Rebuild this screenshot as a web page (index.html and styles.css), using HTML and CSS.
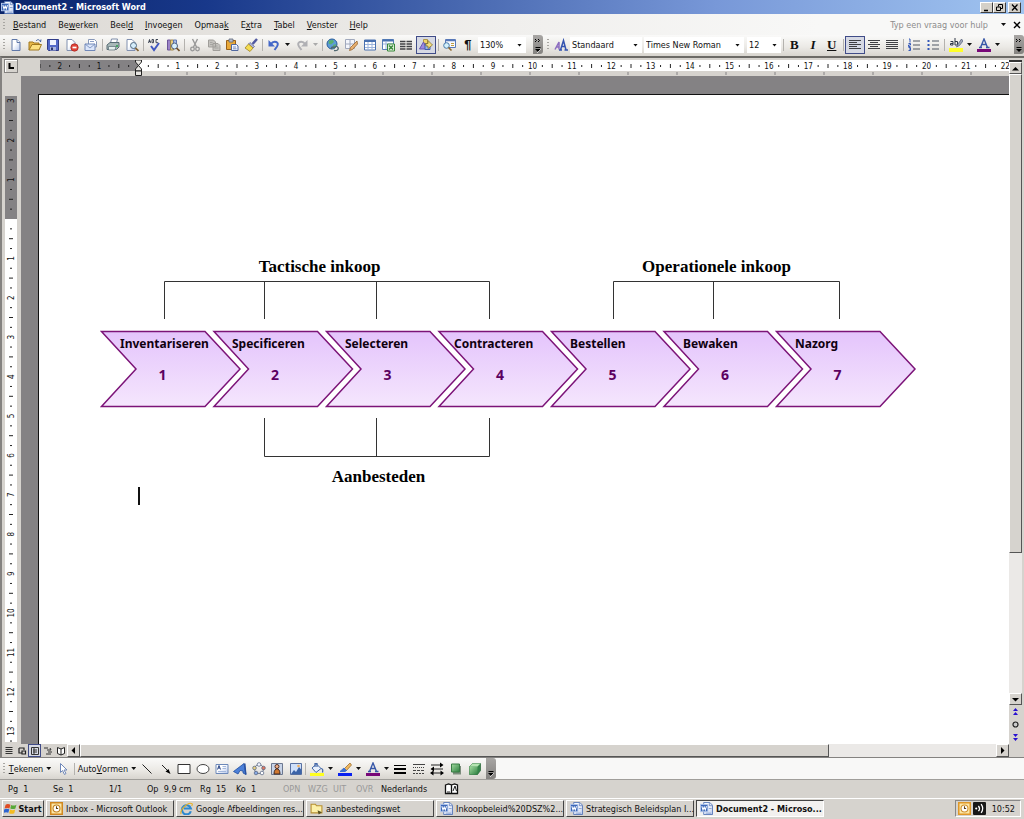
FILE: index.html
```html
<!DOCTYPE html>
<html lang="nl">
<head>
<meta charset="utf-8">
<title>Document2 - Microsoft Word</title>
<link rel="stylesheet" href="styles.css">
</head>
<body>
<svg class="defs" aria-hidden="true">
  <linearGradient id="paper" x1="0" y1="0" x2="1" y2="1"><stop offset=".4" stop-color="#fff"/><stop offset="1" stop-color="#b4c6ec"/></linearGradient>
  <linearGradient id="green" x1="0" y1="0" x2="1" y2="1"><stop offset="0" stop-color="#a4dca0"/><stop offset="1" stop-color="#2e8040"/></linearGradient>
  <linearGradient id="lilac" x1="0" y1="0" x2="0" y2="1"><stop offset="0" stop-color="#e4c4fc"/><stop offset="1" stop-color="#f5e6fd"/></linearGradient>
  <symbol id="word" viewBox="0 0 14 14"><path d="M4 .5h6.500l3 3v10H4z" fill="url(#paper)" stroke="#5878b8"/><path d="M10 1v3h3" fill="#dfe8fa" stroke="#5878b8" stroke-width=".8"/><rect x=".5" y="2.500" width="8" height="8" fill="#3c68b8" stroke="#b8cbee"/><path d="M2 4.500l1.200 4 1.300-3 1.200 3 1.300-4" fill="none" stroke="#fff" stroke-width="1.100"/><path d="M9.500 7h3M6 12h6" stroke="#86a0d0"/></symbol>
</svg>
<div class="window">
  <header class="titlebar">
    <svg class="ico12"><use href="#word"/></svg>
    <h1>Document2 - Microsoft Word</h1>
    <div class="winbtns">
      <button aria-label="Minimaliseren"><svg viewBox="0 0 10 9"><path d="M2 7.500h4" stroke="#000" stroke-width="1.500"/></svg></button>
      <button aria-label="Herstellen"><svg viewBox="0 0 10 9"><path d="M3.500 3.500v-2h4v4h-2M1.500 4h4v3.500h-4z" fill="none" stroke="#000"/></svg></button>
      <button class="close" aria-label="Sluiten"><svg viewBox="0 0 10 9"><path d="M2 1.500l5.500 6M7.500 1.500l-5.500 6" stroke="#000" stroke-width="1.300"/></svg></button>
    </div>
  </header>

  <nav class="menubar">
    <i class="grip"></i>
    <button><u>B</u>estand</button><button>Be<u>w</u>erken</button><button>Beel<u>d</u></button><button><u>I</u>nvoegen</button><button>Opmaa<u>k</u></button><button>E<u>x</u>tra</button><button><u>T</u>abel</button><button><u>V</u>enster</button><button><u>H</u>elp</button>
    <input class="ask" type="text" aria-label="Typ een vraag voor hulp" placeholder="Typ een vraag voor hulp">
    <i class="tri"></i>
    <button class="docclose" aria-label="Document sluiten"><svg class="ico8" viewBox="0 0 8 8"><path d="M1 1l6 6M7 1L1 7" stroke="#000" stroke-width="1.400"/></svg></button>
  </nav>

  <div class="toolbar" role="toolbar" aria-label="Standaard en opmaak">
    <i class="grip"></i>
    <div class="group n5">
      <button aria-label="Nieuw"><svg viewBox="0 0 14 14"><path d="M3 1.500h5l3 3v8H3z" fill="url(#paper)" stroke="#6078a8"/><path d="M8 1.500v3h3" fill="#fff" stroke="#6078a8"/></svg></button>
      <button aria-label="Openen"><svg viewBox="0 0 14 14"><path d="M1 12V4h4l1 1h5v2" fill="#e8b848" stroke="#a07820"/><path d="M1 12l3-5.500h9.500L11 12z" fill="#fce080" stroke="#a07820"/><path d="M8 3c2-2.500 4-1 4.500 1l.5-2.500" fill="none" stroke="#4060a0"/></svg></button>
      <button aria-label="Opslaan"><svg viewBox="0 0 14 14"><path d="M1.500 1.500h11v11h-10l-1-1z" fill="#5268c8" stroke="#303c88"/><path d="M4 2h6v5H4z" fill="#eef2ff"/><path d="M4 9h6v3.500H4z" fill="#a8b4e0"/><path d="M5 9.500h2V12H5z" fill="#28346c"/></svg></button>
      <button aria-label="Machtiging"><svg viewBox="0 0 14 14"><path d="M2 1.500h5l3 3v8H2z" fill="url(#paper)" stroke="#8090b0"/><circle cx="9.500" cy="9.500" r="3.700" fill="#e04438" stroke="#a82018" stroke-width=".7"/><path d="M7.500 9.500h4" stroke="#fff" stroke-width="1.700"/></svg></button>
      <button aria-label="E-mail"><svg viewBox="0 0 14 14"><path d="M4.500 1.500h6l2 2V9h-8z" fill="#fff" stroke="#8898b8"/><path d="M1 6h10v6.500H1z" fill="#dce6fa" stroke="#7088b8"/><path d="M1 6l5 4 5-4M6 3.500h4" fill="none" stroke="#7088b8" stroke-width=".8"/></svg></button>
    </div>
    <i class="sep"></i>
    <div class="group n2">
      <button aria-label="Afdrukken"><svg viewBox="0 0 14 14"><path d="M4.500 5l1-4h6l-1 4z" fill="#fff" stroke="#7c8ca8"/><path d="M1 7l3-2.500h9V9l-2.500 2.500H1z" fill="#a8b8b8" stroke="#586c74"/><path d="M2.500 8.500h7.500l-1 3.500H2.500z" fill="#e6f0ee" stroke="#586c74" stroke-width=".7"/><path d="M10 8h2" stroke="#28a048" stroke-width="1.500"/></svg></button>
      <button aria-label="Afdrukvoorbeeld"><svg viewBox="0 0 14 14"><path d="M2 1.500h5l3 3v8H2z" fill="url(#paper)" stroke="#8090b0"/><circle cx="8.500" cy="7.500" r="3" fill="#d4ecfa" stroke="#506880"/><path d="M10.500 10l3 3" stroke="#806030" stroke-width="1.700"/></svg></button>
    </div>
    <i class="sep"></i>
    <div class="group n2">
      <button aria-label="Spelling"><svg viewBox="0 0 14 14"><path d="M1.500 5l1-3.500 1 3.500M5 1.500v3.200h1.500V1.500zM11 1.500H9v3.200h2M2 3.500h1.500" fill="none" stroke="#303848" stroke-width=".9"/><path d="M4 8l3 4 5-7" fill="none" stroke="#4058c0" stroke-width="2"/></svg></button>
      <button aria-label="Onderzoeken"><svg viewBox="0 0 14 14"><path d="M1.500 2h3v10h-3z" fill="#9c84c8" stroke="#6c5498"/><path d="M4.500 2h3v10h-3z" fill="#e8cc80" stroke="#a08848"/><path d="M7.500 2h3v7h-3z" fill="#a8bce8" stroke="#6078b0"/><circle cx="8.500" cy="8" r="3" fill="#d8f0fc" stroke="#506080"/><path d="M10.500 10l3 3" stroke="#705028" stroke-width="1.700"/></svg></button>
    </div>
    <i class="sep"></i>
    <div class="group n4">
      <button aria-label="Knippen"><svg viewBox="0 0 14 14"><path d="M4.500 1l4 8M9.500 1l-4 8" stroke="#989898" stroke-width="1.400"/><circle cx="4.500" cy="11" r="1.800" fill="none" stroke="#989898" stroke-width="1.300"/><circle cx="9.500" cy="11" r="1.800" fill="none" stroke="#989898" stroke-width="1.300"/></svg></button>
      <button aria-label="Kopiëren"><svg viewBox="0 0 14 14"><path d="M1.500 2h5l2 2v5h-7zM6 5.500h5l2 2v5H6z" fill="#c4c2be" stroke="#a09e9a"/><path d="M7.500 8h3M7.500 10h4M3 4.500h2.500M3 6.500h3" stroke="#a09e9a" stroke-width=".8"/></svg></button>
      <button aria-label="Plakken"><svg viewBox="0 0 14 14"><path d="M1.500 2.500h9v9h-9z" fill="#e8a838" stroke="#986018"/><path d="M4 1h4v3H4z" fill="#b8c0d0" stroke="#606878" stroke-width=".8"/><path d="M6.500 6.500h5l1.500 1.500v4.500H6.500z" fill="#eef4ff" stroke="#5068a0"/><path d="M8 9h3M8 10.800h3.500" stroke="#5068a0" stroke-width=".7"/></svg></button>
      <button aria-label="Opmaak kopiëren"><svg viewBox="0 0 14 14"><path d="M13 1L8.500 6" stroke="#5058a0" stroke-width="2.400"/><path d="M6 4.500l4.500 4-1.500 1.500L4.500 6z" fill="#b0b4dc" stroke="#586090" stroke-width=".7"/><path d="M4.500 6L9 10 6 13.500 1 10z" fill="#f4dc50" stroke="#a08420" stroke-width=".8"/></svg></button>
    </div>
    <i class="sep"></i>
    <button class="w19" aria-label="Ongedaan maken"><svg viewBox="0 0 14 14"><path d="M3.500 6.500C7 1.500 13 4 10 8.500L7.500 12" fill="none" stroke="#4468c8" stroke-width="2"/><path d="M1.500 2v6.500H8z" fill="#4468c8"/></svg></button><button class="drop" aria-label="Ongedaan-lijst"><i class="tri"></i></button>
    <button class="w19" aria-label="Opnieuw"><svg viewBox="0 0 14 14"><path d="M10.500 6.500C7 1.500 1 4 4 8.500L6.500 12" fill="none" stroke="#b0b0b4" stroke-width="2"/><path d="M12.500 2v6.500H6z" fill="#b0b0b4"/></svg></button><button class="drop off" aria-label="Opnieuw-lijst"><i class="tri"></i></button>
    <i class="sep"></i>
    <div class="group n6">
      <button aria-label="Hyperlink"><svg viewBox="0 0 14 14"><circle cx="6" cy="6" r="5" fill="#5c9cd8" stroke="#285c98"/><path d="M3 2.500l4-.5 1 2-3 2.500-2.500-1zM7 7l3-1-1 4-2 .5z" fill="#58b070"/><path d="M5 11c1-3 3-2 3.500-1M8 12.500c3 .5 5-1 4-3s-3-1-3.500 0" fill="none" stroke="#506870" stroke-width="1.400"/></svg></button>
      <button aria-label="Tabellen en randen"><svg viewBox="0 0 14 14"><path d="M1.500 1.500h9v9h-9zM1.500 6h9M6 1.500v9" fill="#f4f6fc" stroke="#a0a8bc"/><path d="M13 3L6.500 9.500 5.500 12.500l3-1L13.500 6z" fill="#e8b070" stroke="#98642c" stroke-width=".8"/></svg></button>
      <button aria-label="Tabel invoegen"><svg viewBox="0 0 14 14"><path d="M1.500 2h11v10h-11z" fill="#fff" stroke="#4870b0"/><path d="M1.500 3h11" stroke="#4870b0" stroke-width="2"/><path d="M5 4v8M9 4v8M2 6.500h10M2 9.500h10" stroke="#9cb4dc"/></svg></button>
      <button aria-label="Excel-werkblad invoegen"><svg viewBox="0 0 14 14"><path d="M1.500 1.500h11v10h-11z" fill="#fff" stroke="#5880b8"/><path d="M1.500 2.500h11" stroke="#4870b0" stroke-width="2"/><path d="M5 3v8M2 6h10" stroke="#9cb4dc"/><path d="M6.500 6h7v7h-7z" fill="#e4f4e0" stroke="#388838"/><path d="M8 7.500l4 4M12 7.500l-4 4" stroke="#388838" stroke-width="1.500"/></svg></button>
      <button aria-label="Kolommen"><svg viewBox="0 0 14 14"><path d="M1 3.500h5.500M1 6h5.500M1 8.500h5.500M1 11h5.500M7.500 3.500H13M7.500 6H13M7.500 8.500H13M7.500 11H13" stroke="#404044" stroke-width="1.700"/></svg></button>
      <button class="on" aria-label="Tekenen"><svg viewBox="0 0 14 14"><path d="M4.500 1.500h4v4h-4z" fill="#f0d468" stroke="#b09848"/><path d="M.5 11L4.500 4l3.500 7z" fill="#9c88e0" stroke="#6858b0"/><path d="M6 6h5v5.500H6z" fill="#94b4ec" stroke="#405cb0"/><path d="M9 2.500L13.500 7 9 10.500V8H7V5.500h2z" fill="#f0dc80" stroke="#806820" stroke-width=".7"/></svg></button>
    </div>
    <i class="sep"></i>
    <div class="group n2">
      <button aria-label="Documentstructuur"><svg viewBox="0 0 14 14"><path d="M3.500 1.500h10v8h-10z" fill="#f8faff" stroke="#5878b8"/><path d="M4 2.500h9" stroke="#5878b8" stroke-width="1.500"/><path d="M9 5.500h3M9 7.500h3" stroke="#c09c40"/><circle cx="4.500" cy="7.500" r="2.800" fill="#d4f0fa" stroke="#4878a8"/><path d="M6.500 9.500l3 3" stroke="#90682c" stroke-width="1.600"/></svg></button>
      <button aria-label="Alineamarkeringen"><span class="pilcrow">¶</span></button>
    </div>
    <label class="combo zoomc"><select aria-label="In-/uitzoomen"><option>130%</option></select></label>
    <button class="overflow" aria-label="Opties voor werkbalk"><svg viewBox="0 0 10 18"><path d="M2 3l1.500 1.500L2 6M5 3l1.500 1.500L5 6" fill="none" stroke="#000"/><path d="M2.500 11.500h5" stroke="#000"/><path d="M2 13h6l-3 3z"/><path d="M4 17l4-4" stroke="#fff" stroke-width=".7"/></svg></button>
    <i class="grip g2"></i>
    <button class="w19" aria-label="Stijlen en opmaak"><svg viewBox="0 0 14 14"><path d="M1 11.500L5 4v7.500M2.500 9H5" fill="none" stroke="#8c6cc0" stroke-width="1.500"/><path d="M6.500 12l3-9.500 2.500 9.500M7.500 8.500h4M5 12h3M10.500 12H14" fill="none" stroke="#3454b0" stroke-width="1.500"/></svg></button>
    <label class="combo style"><select aria-label="Stijl"><option>Standaard</option></select></label>
    <label class="combo font"><select aria-label="Lettertype"><option>Times New Roman</option></select></label>
    <label class="combo size"><select aria-label="Tekengrootte"><option>12</option></select></label>
    <i class="sep"></i>
    <div class="group n3 biu"><button aria-label="Vet"><b>B</b></button><button aria-label="Cursief"><em>I</em></button><button aria-label="Onderstrepen"><u>U</u></button></div>
    <i class="sep"></i>
    <div class="group n3">
      <button class="on" aria-label="Links uitlijnen"><svg viewBox="0 0 14 14"><path d="M1 2.500h12M1 4.500h8M1 6.500h12M1 8.500h8M1 10.500h12" stroke="#404044" stroke-width="1.200"/></svg></button>
      <button aria-label="Centreren"><svg viewBox="0 0 14 14"><path d="M1 2.500h12M3 4.500h8M1 6.500h12M3 8.500h8M1 10.500h12" stroke="#404044" stroke-width="1.200"/></svg></button>
      <button aria-label="Uitvullen"><svg viewBox="0 0 14 14"><path d="M1 2.500h12M1 4.500h12M1 6.500h12M1 8.500h12M1 10.500h12" stroke="#404044" stroke-width="1.200"/></svg></button>
    </div>
    <i class="sep"></i>
    <div class="group n2">
      <button aria-label="Nummering"><svg viewBox="0 0 14 14"><path d="M6 3h7M6 7h7M6 11h7" stroke="#505864" stroke-width="1.200"/><path d="M2 1l1 0v3.500M1.500 5.500h2v1.500h-2v1.500h2M1.500 9.500h2v3h-2M2 11h1.500" fill="none" stroke="#3458b8"/></svg></button>
      <button aria-label="Opsommingstekens"><svg viewBox="0 0 14 14"><path d="M6 3h7M6 7h7M6 11h7" stroke="#505864" stroke-width="1.200"/><path d="M1.500 2h2v2h-2zM1.500 6h2v2h-2zM1.500 10h2v2h-2z" fill="#3458b8"/></svg></button>
    </div>
    <i class="sep"></i>
    <button class="w19" aria-label="Markeren"><svg viewBox="0 0 14 14"><path d="M0 10h14v4H0z" fill="#ffff28"/><path d="M1.500 3.500H4V7H1.500V5.500H4M6 0v7h2.500V3.500H6" fill="none" stroke="#303848"/><path d="M12.500 1L9 6 7.500 9 10.500 7.500 14 3z" fill="#a0a8b8" stroke="#505c78" stroke-width=".7"/></svg></button><button class="drop" aria-label="Markeerkleur"><i class="tri"></i></button>
    <button class="w19" aria-label="Tekstkleur"><svg viewBox="0 0 14 14"><path d="M0 11h14v3H0z" fill="#780878"/><path d="M3.500 9.500L7 1l3.500 8.500M4.500 6.500h5M2 9.500h3M9 9.500h3.500" fill="none" stroke="#3858a8" stroke-width="1.400"/></svg></button><button class="drop" aria-label="Kleurenlijst"><i class="tri"></i></button>
    <button class="overflow last" aria-label="Opties voor werkbalk Opmaak"><svg viewBox="0 0 10 18"><path d="M2 3l1.500 1.500L2 6M5 3l1.500 1.500L5 6" fill="none" stroke="#000"/><path d="M2.500 11.500h5" stroke="#000"/><path d="M2 13h6l-3 3z"/></svg></button>
  </div>

  <main class="work">
    <div class="left">
      <div class="corner"><button aria-label="Tabstop links"><svg viewBox="0 0 10 10"><path d="M3.500 2v5H8" fill="none" stroke="#000" stroke-width="2"/></svg></button></div>
      <div class="vruler"><svg id="vr" aria-hidden="true"></svg></div>
    </div>
    <div class="middle">
      <div class="hruler"><svg id="hr" aria-hidden="true"></svg></div>
      <div class="canvas">
        <article class="page">
          <svg class="diagram" id="diagram" viewBox="100 255 820 232" role="img" aria-label="Inkoopproces">
            <text class="head" x="319.500" y="272">Tactische inkoop</text>
            <text class="head" x="716.500" y="272">Operationele inkoop</text>
            <text class="head" x="378.500" y="482">Aanbesteden</text>
            <path class="bracket" d="M164.500 319V281.500H489.500V319M264.500 281v38M376.500 281v38M613.500 319V281.500H839.500V319M713.500 281v38M264.500 418v38.500H489.500V418M376.500 418v38"/>
          </svg>
          <div class="caret"></div>
        </article>
      </div>
    </div>
    <div class="vscroll">
      <i class="split"></i>
      <button aria-label="Omhoog"><svg viewBox="0 0 9 9"><path d="M1 6.500h7L4.500 3z"/></svg></button>
      <i class="thumb"></i><i class="trough"></i>
      <button aria-label="Omlaag"><svg viewBox="0 0 9 9"><path d="M1 3h7L4.500 6.500z"/></svg></button>
      <button class="flat" aria-label="Vorige pagina"><svg viewBox="0 0 9 9"><path d="M2 4h5L4.500 1zM2 8h5L4.500 5z" fill="#2810d0"/></svg></button>
      <button class="flat" aria-label="Bladeren"><svg viewBox="0 0 9 9"><circle cx="4.500" cy="4.500" r="2.500" fill="#ccc" stroke="#202020" stroke-width="1.200"/></svg></button>
      <button class="flat" aria-label="Volgende pagina"><svg viewBox="0 0 9 9"><path d="M2 1h5L4.500 4zM2 5h5L4.500 8z" fill="#2810d0"/></svg></button>
    </div>
    <div class="hscroll">
      <div class="views">
        <button aria-label="Normaal"><svg viewBox="0 0 10 10"><path d="M1.500 1.500h7M1.500 3.500h7M1.500 5.500h7M1.500 7.500h7" stroke="#333"/></svg></button>
        <button aria-label="Weblay-out"><svg viewBox="0 0 10 10"><path d="M2 2h5v2M2 2v5h3M5 5h3.500v3H5z" fill="none" stroke="#222" stroke-width="1.200"/></svg></button>
        <button class="on" aria-label="Afdrukweergave"><svg viewBox="0 0 10 10"><path d="M1.500 1.500h7v7h-7zM3 4h4M3 6h4M4 2v6" fill="none" stroke="#333"/></svg></button>
        <button aria-label="Overzicht"><svg viewBox="0 0 10 10"><path d="M1 2h4M4 4h4M5 6h4M3 8h5M7 2l1 2" fill="none" stroke="#333"/></svg></button>
        <button aria-label="Leesindeling"><svg viewBox="0 0 10 10"><path d="M5 3L1.500 1.500v6L5 9l3.500-1.500v-6zv6" fill="#fff" stroke="#222"/></svg></button>
      </div>
      <button class="arrow" aria-label="Naar links"><svg viewBox="0 0 9 9"><path d="M6 1v7L2.500 4.500z"/></svg></button>
      <i class="thumb"></i><i class="trough"></i>
      <button class="arrow" aria-label="Naar rechts"><svg viewBox="0 0 9 9"><path d="M3 1v7l3.500-3.500z"/></svg></button>
      <i class="box"></i>
    </div>
  </main>

  <div class="toolbar drawbar" role="toolbar" aria-label="Tekenen">
    <i class="grip"></i>
    <button class="label tek"><u>T</u>ekenen<i class="tri"></i></button>
    <button class="w19" aria-label="Objecten selecteren"><svg viewBox="0 0 14 14"><path d="M4.500 1.500v9l2-2 2 4 1.500-1-2-3.500h3z" fill="#fff" stroke="#7088b8"/></svg></button>
    <i class="sep"></i>
    <button class="label auto">Auto<u>V</u>ormen<i class="tri"></i></button>
    <div class="group n9">
      <button aria-label="Lijn"><svg viewBox="0 0 14 14"><path d="M2.500 2.500l9 9" stroke="#222"/></svg></button>
      <button aria-label="Pijl"><svg viewBox="0 0 14 14"><path d="M3 3l6 6" stroke="#222"/><path d="M11.500 12l-5-2.500L9.500 7z"/></svg></button>
      <button aria-label="Rechthoek"><svg viewBox="0 0 14 14"><path d="M1 2.500h12v9H1z" fill="#fff" stroke="#333"/></svg></button>
      <button aria-label="Ovaal"><svg viewBox="0 0 14 14"><ellipse cx="7" cy="7" rx="6" ry="4.500" fill="#fff" stroke="#444"/></svg></button>
      <button aria-label="Tekstvak"><svg viewBox="0 0 14 14"><path d="M1 2.500h12v9H1z" fill="url(#paper)" stroke="#6c88b8"/><path d="M2.500 7.500l1.500-4 1.500 4M3 6h2" fill="none" stroke="#2c4888"/><path d="M7.500 4.500H11M7.500 6.500H11M3 9.500h8" stroke="#a4b8dc"/></svg></button>
      <button aria-label="WordArt"><svg viewBox="0 0 14 14"><path d="M.5 9.500L11 1.500l2 11-3-1.500v-2L7 8.500 5 12z" fill="#4c80d8" stroke="#204ca0" stroke-width=".8"/><path d="M11 1.500l1.500 0 1 11h-1.500z" fill="#2850a0"/></svg></button>
      <button aria-label="Diagram"><svg viewBox="0 0 14 14"><circle cx="7" cy="7" r="4.500" fill="none" stroke="#707c90"/><g stroke="#506080" stroke-width=".7"><circle cx="7" cy="2.500" r="1.800" fill="#f4f6ff"/><circle cx="11.500" cy="6" r="1.800" fill="#e07860"/><circle cx="10" cy="11" r="1.800" fill="#fff"/><circle cx="4" cy="11" r="1.800" fill="#88a8e0"/><circle cx="2.500" cy="6" r="1.800" fill="#e8d080"/></g></svg></button>
      <button aria-label="Illustratie"><svg viewBox="0 0 14 14"><path d="M1.500 1.500h11v11h-11z" fill="#c8d4e8" stroke="#6c7890"/><circle cx="7" cy="4.500" r="2" fill="#f0b088" stroke="#503028"/><path d="M4 12c0-7 6-7 6 0z" fill="#d07830" stroke="#402820"/></svg></button>
      <button aria-label="Afbeelding"><svg viewBox="0 0 14 14"><path d="M1.500 1.500h11v11h-11z" fill="#cfe0fa" stroke="#5870a0"/><path d="M2 12l3-4 2 2 3-5 2.500 3v4z" fill="#3c64a8"/><circle cx="9.500" cy="4" r="1.300" fill="#f0b060"/></svg></button>
    </div>
    <i class="sep"></i>
    <button class="w19" aria-label="Opvulkleur"><svg viewBox="0 0 14 14"><path d="M0 11h14v3H0z" fill="#ffff20"/><path d="M6.500 2L11 6.500 6 10.500 2 6z" fill="#e8f0fc" stroke="#4468a8"/><path d="M5 5V1.500h2V5M11 6.500c2 0 2 2 1.500 4" fill="none" stroke="#4468a8" stroke-width="1.200"/></svg></button><button class="drop" aria-label="Opvulkleuren"><i class="tri"></i></button>
    <button class="w19" aria-label="Lijnkleur"><svg viewBox="0 0 14 14"><path d="M0 11h14v3H0z" fill="#0820f0"/><path d="M12 1L6 7l2 2 5.500-6z" fill="#f0b860" stroke="#906020" stroke-width=".7"/><path d="M6 6L2 9.500H7L8.500 8.500z" fill="#3c70d0" stroke="#3c70d0"/></svg></button><button class="drop" aria-label="Lijnkleuren"><i class="tri"></i></button>
    <button class="w19" aria-label="Tekstkleur"><svg viewBox="0 0 14 14"><path d="M0 11h14v3H0z" fill="#780878"/><path d="M3.500 9.500L7 1l3.500 8.500M4.500 6.500h5M2 9.500h3M9 9.500h3.500" fill="none" stroke="#3858a8" stroke-width="1.400"/></svg></button><button class="drop" aria-label="Tekstkleuren"><i class="tri"></i></button>
    <div class="group n5">
      <button aria-label="Lijnstijl"><svg viewBox="0 0 14 14"><path d="M1 3.500h12" stroke="#000"/><path d="M1 7h12" stroke="#000" stroke-width="2"/><path d="M1 11h12" stroke="#000" stroke-width="2"/></svg></button>
      <button aria-label="Streepstijl"><svg viewBox="0 0 14 14"><path d="M1 2.500h12" stroke="#444"/><path d="M1 5.500h12" stroke="#444" stroke-dasharray="1 1"/><path d="M1 8.500h12" stroke="#444" stroke-dasharray="3 1"/><path d="M1 11.500h12" stroke="#444" stroke-dasharray="2 1"/></svg></button>
      <button aria-label="Pijlstijl"><svg viewBox="0 0 14 14"><path d="M1 3h10M3 7h10M2 11h10" stroke="#222" stroke-width="1.200"/><path d="M10 .5L13.500 3 10 5.500zM4 4.500L.5 7 4 9.500zM10.500 8.500L14 11l-3.500 2.500zM3.500 8.500L0 11l3.500 2.500z"/></svg></button>
      <button aria-label="Schaduwstijl"><svg viewBox="0 0 14 14"><path d="M4 4h8v8.500H4z" fill="#7c8c7c"/><path d="M2.500 2h8v8h-8z" fill="url(#green)" stroke="#387c44"/></svg></button>
      <button aria-label="3D-stijl"><svg viewBox="0 0 14 14"><path d="M1.500 4.500l3-3h8v7l-3 4h-8z" fill="#348448" stroke="#246434" stroke-width=".7"/><path d="M1.500 4.500h8v8h-8z" fill="url(#green)"/><path d="M1.500 4.500l3-3h8l-3 3z" fill="#b4e4b0"/></svg></button>
    </div>
    <button class="overflow" aria-label="Opties voor werkbalk Tekenen"><svg viewBox="0 0 10 18"><path d="M2.500 11.500h5" stroke="#000"/><path d="M2 13h6l-3 3z"/><path d="M4 17l4-4" stroke="#fff" stroke-width=".7"/></svg></button>
  </div>

  <footer class="status">
    <span class="c45">Pg&nbsp; 1</span><span class="c56">Se&nbsp; 1</span><span class="c38">1/1</span><span class="c53">Op&nbsp; 9,9 cm</span><span class="c36">Rg&nbsp; 15</span><span class="c47">Ko&nbsp; 1</span><span class="c26 off">OPN</span><span class="c26 off">WZG</span><span class="c23 off">UIT</span><span class="c26 off">OVR</span><span class="c63">Nederlands</span>
    <svg class="book" viewBox="0 0 15 12"><path d="M1.500 2l3-1 3 1v8.500h-6zM7.500 2l3-1 3 1v8.500h-6z" fill="#fff" stroke="#111" stroke-width="1.300"/><path d="M9 8l2-5 1.500 5M3 9h3" fill="none" stroke="#222"/></svg>
  </footer>

  <div class="taskbar">
    <button class="start"><svg class="ico12" viewBox="0 0 12 12"><path d="M1.500 2.500Q3.500 1 6 2.500L5 6Q3 5 .5 6z" fill="#e04c24"/><path d="M6.600 2.700Q9 4 11.500 2.500L10.500 6Q8.500 7 5.800 6z" fill="#58a838"/><path d="M.3 6.700Q2.500 5.500 4.900 6.800L4 10Q2 9-.5 10z" fill="#2c64d0"/><path d="M5.600 7Q8 8 10.300 7L9.500 10.300Q7 11.500 4.700 10.300z" fill="#f4bc20"/></svg><b>Start</b></button>
    <button class="task"><svg class="ico12" viewBox="0 0 12 12"><rect x=".7" y=".7" width="10.600" height="10.600" fill="#fce8a8" stroke="#d08820" stroke-width="1.400"/><circle cx="6" cy="6" r="3.200" fill="#fff" stroke="#c08020"/><path d="M6 4v2h1.500" fill="none" stroke="#604010"/></svg><span>Inbox - Microsoft Outlook</span></button>
    <button class="task"><svg class="ico12" viewBox="0 0 12 12"><path d="M10 8.500A4.200 4.200 0 1 1 10 6H3.500" fill="none" stroke="#2c88d0" stroke-width="2"/><path d="M1 11C-.5 8 7-.5 11 1.500c.5.500.3 1.500-.2 2.200" fill="none" stroke="#e8b020"/></svg><span>Google Afbeeldingen res...</span></button>
    <button class="task"><svg class="ico12" viewBox="0 0 12 12"><path d="M1 2h4l1 1.500h5V10H1z" fill="#fcf0a8" stroke="#b89030"/><path d="M7 7.500l4 2-3 2z" fill="#585020"/></svg><span>aanbestedingswet</span></button>
    <button class="task"><svg class="ico12"><use href="#word"/></svg><span>Inkoopbeleid%20DSZ%2...</span></button>
    <button class="task"><svg class="ico12"><use href="#word"/></svg><span>Strategisch Beleidsplan I...</span></button>
    <button class="task active"><svg class="ico12"><use href="#word"/></svg><span>Document2 - Microso...</span></button>
    <div class="tray">
      <svg class="ico12" viewBox="0 0 12 12"><rect x=".7" y=".7" width="10.600" height="10.600" fill="#fce8a8" stroke="#e09828" stroke-width="1.400"/><circle cx="6" cy="6" r="3.200" fill="#fff" stroke="#d09030"/><path d="M6 4v2h1.500" fill="none" stroke="#604010"/></svg>
      <svg class="ico12" viewBox="0 0 12 12"><rect width="12" height="12" rx="1" fill="#181818"/><circle cx="3" cy="6" r="1" fill="#fff"/><path d="M5 3.500q2 2.500 0 5M7.500 2q3 4 0 8" fill="none" stroke="#fff" stroke-width="1.200"/></svg>
      <time>10:52</time>
    </div>
  </div>
</div>
<script src="page.js"></script>
</body>
</html>
```
FILE: styles.css
```css
* { box-sizing: border-box; }
body { margin: 0; font-family: "DejaVu Sans Condensed", "DejaVu Sans", sans-serif; font-size: 9px; color: #111; background: #d4d0c8; }
button, input, select { font: inherit; color: inherit; margin: 0; padding: 0; border: 0; background: none; border-radius: 0; }
button { display: flex; align-items: center; justify-content: center; flex: none; }
svg { display: block; flex: none; }
.defs { position: absolute; width: 0; height: 0; }
.window { display: flex; flex-direction: column; height: 100vh; overflow: hidden; }
.ico12 { width: 13px; height: 13px; }
.ico8 { width: 8px; height: 8px; }
.tri { flex: none; width: 5px; height: 3px; background: #111; clip-path: polygon(0 0, 100% 0, 50% 100%); }
.grip { flex: none; width: 2px; height: 12px; margin: 0 2px 0 3px; background: repeating-linear-gradient(#a8a6a2 0 1px, transparent 1px 3px); }
.sep { flex: none; width: 1px; height: 12px; margin: 0 1px 0 2px; background: #b4b2ae; }

.titlebar { flex: none; display: flex; align-items: center; height: 14px; padding-left: 1px; gap: 1px; background: linear-gradient(90deg, #0a246a, #18388a 20%, #4868b0 45%, #7898d8 70%, #a0c4f0); color: #fff; }
.titlebar h1 { margin: 0; font-size: 9px; line-height: 13px; flex: 1; }
.winbtns { display: flex; padding-right: 3px; }
.winbtns button { width: 13px; height: 11px; background: #d4d0c8; border: 1px solid; border-color: #fff #404040 #404040 #fff; }
.winbtns svg { width: 10px; height: 9px; }
.winbtns .close { margin-left: 2px; }

.menubar { flex: none; display: flex; align-items: center; height: 21px; background: linear-gradient(90deg, #dcd9d4, #f0efed 50%, #f8f8f7 80%); }
.menubar > button { padding: 0 6px; height: 18px; }
.menubar button:not(.docclose) { display: block; line-height: 18px; }
.ask { flex: 1; text-align: right; margin-right: 13px; min-width: 0; }
.ask::placeholder { color: #8c8c8c; opacity: 1; }
.menubar > .docclose { padding: 0; margin: 0 3px 0 7px; }

.toolbar { flex: none; display: flex; align-items: center; height: 21px; padding-bottom: 2px; background: linear-gradient(#fafaf9, #eceae6 55%, #d8d5cf); }
.toolbar button { height: 18px; }
.toolbar button svg { width: 14px; height: 14px; }
.group { flex: none; display: flex; }
.group button { flex: 1; }
.n2 { width: 37px; }
.n3 { width: 56px; }
.n4 { width: 74px; }
.n5 { width: 93px; }
.n6 { width: 112px; }
.n9 { width: 167px; }
.w19 { width: 19px; }
.drop { width: 9px; }
.off { color: #999; }
.drop.off .tri { background: #aaa; }
.toolbar .on, .views .on { border: 1px solid #404c88; background: #d6d9e4; }
.pilcrow { font: bold 13px/14px "Liberation Sans", sans-serif; }
.combo { flex: none; position: relative; background: #fff; height: 16px; }
.combo::after { content: ""; position: absolute; right: 4px; top: 7px; width: 5px; height: 3px; background: #111; clip-path: polygon(0 0, 100% 0, 50% 100%); }
.combo select { appearance: none; display: block; width: 100%; height: 16px; padding-left: 2px; }
.zoomc { width: 48px; margin-left: 1px; }
.style { width: 72px; }
.font { width: 100px; margin-left: 2px; }
.size { width: 34px; margin-left: 3px; }
.toolbar .overflow { width: 10px; margin-left: 7px; height: auto; background: linear-gradient(#a8a6a4, #84827f); border-radius: 0 3px 3px 0; align-self: stretch; }
.toolbar .overflow svg { width: 10px; height: 18px; }
.toolbar .overflow.last { margin-left: auto; }
.g2 { margin-left: 4px; }
.biu { font: 13px/16px "Liberation Serif", serif; font-weight: bold; }

.work { flex: 1; min-height: 0; display: grid; grid-template-columns: 19px 1fr 15px; grid-template-rows: 1fr 13px; border-top: 2px solid #6c6a66; border-left: 2px solid #848280; background: #d6d3ce; }
.left { display: flex; flex-direction: column; min-height: 0; padding-bottom: 2px; }
.corner { flex: none; height: 38px; padding: 1px 2px; }
.corner button { width: 14px; height: 14px; border: 1px solid #848280; box-shadow: inset 1px 1px #fff; }
.corner svg { width: 10px; height: 10px; }
.vruler { flex: 1; min-height: 0; width: 12px; margin-left: 3px; background: linear-gradient(#848284 123px, #fff 123px); }
.middle { display: flex; flex-direction: column; min-width: 0; min-height: 0; }
.hruler { flex: none; height: 11px; margin: 2px 0 5px 19px; background: linear-gradient(90deg, #848284 99px, #fff 99px); }
.hruler svg, .vruler svg { width: 100%; height: 100%; overflow: hidden; }
.hruler svg { height: 17px; }
.hruler text, .vruler text { font-size: 8px; text-anchor: middle; fill: #111; }
.canvas { flex: 1; min-height: 0; display: flex; padding: 18px 0 0 17px; background: #848284; }
.page { flex: 1; min-width: 0; overflow: hidden; padding: 160px 0 0 61px; background: #fff; border: solid #111; border-width: 1px 0 0 1px; }
.diagram { width: 820px; height: 232px; }
.caret { width: 2px; height: 18px; margin-left: 38px; background: #111; }
.head { font: bold 17px "Liberation Serif", serif; text-anchor: middle; }
.bracket { fill: none; stroke: #333; }
.step { fill: url(#lilac); stroke: #7c1478; stroke-width: 1.5px; }
.name { font: bold 12px "Noto Sans", sans-serif; fill: #100010; }
.num { font: bold 14px "Noto Sans", sans-serif; fill: #5c0060; text-anchor: middle; }

.vscroll { display: flex; flex-direction: column; padding: 2px 2px 0 0; }
.split { height: 2px; background: #333; }
.vscroll button, .arrow { width: 13px; height: 12px; border: 1px solid; border-color: #fff #555 #555 #fff; background: #d6d3ce; }
.vscroll button svg, .arrow svg { width: 9px; height: 9px; }
.vscroll .flat { border: 0; height: 13px; }
.thumb { background: #d6d3ce; border: 1px solid; border-color: #fff #555 #555 #fff; }
.trough { background: #ebe9e7; }
.vscroll .thumb { flex: 479; }
.vscroll .trough { flex: 141; }
.hscroll { grid-column: 1 / -1; display: flex; align-items: stretch; }
.views { display: flex; }
.views button { width: 13px; height: 13px; }
.views svg { width: 10px; height: 10px; }
.hscroll .arrow { height: 13px; }
.hscroll .thumb { flex: 750; }
.hscroll .trough { flex: 168; }
.box { width: 15px; }

.drawbar { height: 22px; padding-bottom: 0; border-top: 1px solid #848280; background: linear-gradient(90deg, transparent 491px, #f8f8f7 491px), linear-gradient(#fafaf9, #eceae6 55%, #d8d5cf); }
.label .tri { margin-left: 3px; }
.tek { width: 46px; }
.auto { width: 62px; }
.n9 + .sep { margin-left: 0; }
.drawbar .overflow { margin-left: 2px; }

.status { flex: none; display: flex; align-items: center; height: 19px; padding-left: 8px; border-top: 1px solid #a09e9a; background: #d6d3ce; }
.c23 { width: 23px; } .c26 { width: 25px; } .c36 { width: 36px; } .c38 { width: 38px; } .c45 { width: 45px; } .c47 { width: 47px; } .c53 { width: 53px; } .c56 { width: 56px; } .c63 { width: 63px; }
.status span { flex: none; white-space: nowrap; }
.book { width: 15px; height: 12px; }

.taskbar { flex: none; display: flex; align-items: stretch; height: 21px; padding: 1px 3px 2px 2px; gap: 2px; border-top: 1px solid #fff; background: #d6d3ce; }
.start, .task { border: 1px solid; border-color: #fff #444 #444 #fff; }
.start { width: 42px; gap: 1px; }
.task { flex: 0 1 128px; min-width: 0; justify-content: flex-start; gap: 3px; padding-left: 3px; white-space: nowrap; }
.task.active { font-weight: bold; border-color: #444 #fff #fff #444; background: #f2f1ef; }
.tray { display: flex; align-items: center; gap: 2px; margin-left: auto; padding: 0 5px 0 2px; border: 1px solid; border-color: #888 #fff #fff #888; }
.tray time { margin-left: 4px; }
```
FILE: page.js
```js
const NS = "http://www.w3.org/2000/svg";
function add(parent, tag, attrs, text) {
  const el = document.createElementNS(NS, tag);
  for (const key in attrs) el.setAttribute(key, attrs[key]);
  if (text !== undefined) el.textContent = text;
  parent.appendChild(el);
  return el;
}

// Rulers: one centimetre spans 39.4 units at 130% zoom.
const CM = 39.4;
const hr = document.getElementById("hr");
for (let q = -10; q <= 88; q++) {
  if (q === 0) continue;
  const x = 98.5 + q * CM / 4;
  if (q % 4 === 0) add(hr, "text", { x: x, y: 9 }, Math.abs(q / 4));
  else if (q % 2 === 0) add(hr, "path", { d: `M${x} 4v4`, stroke: "#222" });
  else add(hr, "path", { d: `M${x} 5v2`, stroke: "#222" });
}
for (let x = 147; x < 960; x += 49) add(hr, "path", { d: `M${x} 12v3`, stroke: "#848284" });
add(hr, "path", { d: "M95.500 0h6v2l-3 3.500 3 3.500v2h-6v-2l3-3.500-3-3.500z", fill: "#e8e6e2", stroke: "#222" });
add(hr, "path", { d: "M95.500 11h6v4.500h-6z", fill: "#e8e6e2", stroke: "#222" });

const vr = document.getElementById("vr");
for (let q = -12; q <= 53; q++) {
  if (q === 0) continue;
  const y = 123 + q * CM / 4;
  if (q % 4 === 0) add(vr, "text", { x: 0, y: 0, transform: `translate(9 ${y}) rotate(-90)` }, Math.abs(q / 4));
  else if (q % 2 === 0) add(vr, "path", { d: `M4 ${y}h4`, stroke: "#222" });
  else add(vr, "path", { d: `M5 ${y}h2`, stroke: "#222" });
}

// Process steps: name and left edge of its label.
const steps = [["Inventariseren", 120], ["Specificeren", 232], ["Selecteren", 345], ["Contracteren", 454], ["Bestellen", 570], ["Bewaken", 683], ["Nazorg", 795]];
const diagram = document.getElementById("diagram");
steps.forEach(([name, labelX], i) => {
  const x = 101.5 + i * 112.5;
  add(diagram, "path", { class: "step", d: `M${x} 331.500h103.500l35 37.500-35 37.500H${x}l34.500-37.500z` });
  add(diagram, "text", { class: "name", x: labelX, y: 348 }, name);
  add(diagram, "text", { class: "num", x: x + 61, y: 380 }, i + 1);
});
```
